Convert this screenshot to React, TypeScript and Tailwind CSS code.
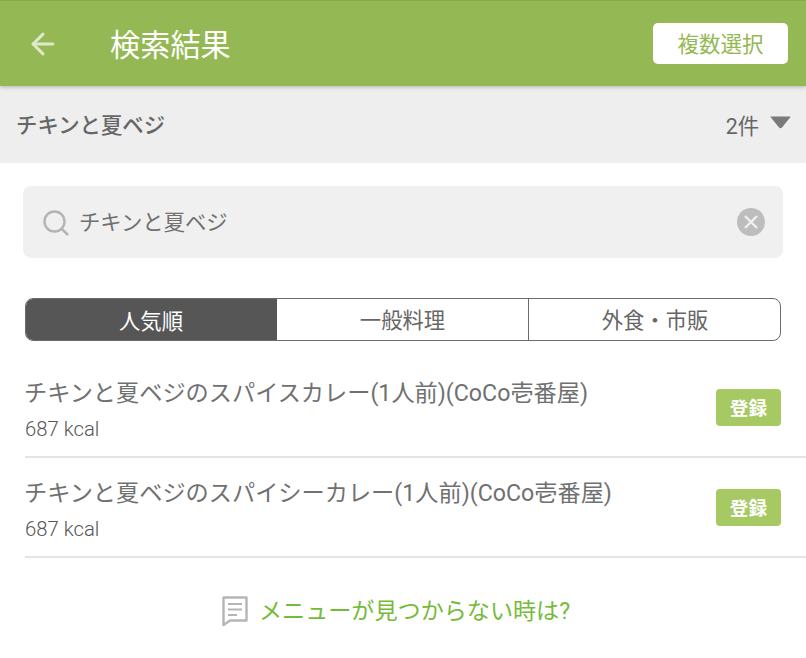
import React from 'react';
import { ArrowLeft } from 'lucide-react';

const font = { fontFamily: 'Roboto, "Noto Sans CJK JP", sans-serif' };

const items = [
  { name: 'チキンと夏ベジのスパイスカレー(1人前)(CoCo壱番屋)', kcal: '687 kcal' },
  { name: 'チキンと夏ベジのスパイシーカレー(1人前)(CoCo壱番屋)', kcal: '687 kcal' },
];

const App: React.FC = () => {
  return (
    <div className="w-[806px] h-[658px] overflow-hidden bg-white" style={font}>
      <header className="relative z-10 h-[86px] bg-[#94b853] border-t border-[#86aa48] shadow-[0_1px_4px_rgba(0,0,0,0.25)] flex items-center">
        <ArrowLeft className="ml-[26px] w-[34px] h-[34px] text-[#dfe9cc]" strokeWidth={2.1} />
        <h1 className="ml-[50px] pt-[5px] text-[30.2px] leading-none text-white">検索結果</h1>
        <button className="ml-auto mr-[18px] w-[135px] h-[41px] pt-[3px] bg-white rounded-[5px] text-[21.5px] leading-none text-[#94b853]">
          複数選択
        </button>
      </header>

      <div className="h-[77px] bg-[#eeeeee] flex items-center pl-4 pr-[15px]">
        <span className="pt-[3px] text-[21.4px] font-medium text-[#666666]">チキンと夏ベジ</span>
        <span className="ml-auto pt-[5px] text-[21.33px] text-[#666666] -translate-x-[2px]">2件</span>
        <svg viewBox="0 0 21 13" className="ml-[9px] mb-[5px] w-[21px] h-[13px]">
          <path d="M0.5 1 Q0.5 0.5 1 0.5 H20 Q20.5 0.5 20.5 1 L12 11.5 Q10.5 13 9 11.5 Z" fill="#7a7a7a" />
        </svg>
      </div>

      <div className="mx-[23px] mt-[23px] h-[72px] bg-[#f0f0f0] rounded-lg flex items-center pl-5 pr-[18px]">
        <svg viewBox="0 0 26 26" className="w-[26px] h-[26px] mt-[2px]" fill="none" stroke="#b4b4b4">
          <circle cx="11.5" cy="11.5" r="10" strokeWidth="2.4" />
          <path d="M18.8 18.8 L25 25" strokeWidth="2.6" />
        </svg>
        <span className="ml-[10px] pt-[2px] text-[21.33px] text-[#707070]">チキンと夏ベジ</span>
        <svg viewBox="0 0 28 28" className="ml-auto w-[28px] h-[28px]">
          <circle cx="14" cy="14" r="14" fill="#bdbdbd" />
          <path d="M8 8 L20 20 M20 8 L8 20" stroke="#f0f0f0" strokeWidth="2.4" />
        </svg>
      </div>

      <div className="mx-[25px] mt-10 h-[43px] grid grid-cols-[251px_252px_252px] rounded-lg border border-[#6b6b6b] overflow-hidden text-[21.33px]">
        <div className="pt-[4px] bg-[#565656] text-white flex items-center justify-center -ml-px -my-px">人気順</div>
        <div className="pt-[3px] text-[#666666] border-r border-[#6b6b6b] flex items-center justify-center">一般料理</div>
        <div className="pt-[3px] text-[#666666] flex items-center justify-center">外食・市販</div>
      </div>

      <div className="ml-[25px]">
        {items.map(item => (
          <div key={item.name} className="h-[100px] first:h-[117px] border-b-2 border-[#e4e4e4] flex items-end pb-[13px] pr-[25px]">
            <div className="flex-1">
              <div className="mb-[5px] text-[23.2px] leading-[34px] text-[#707070] -ml-px">{item.name}</div>
              <div className="text-[20.3px] leading-[28px] font-light text-[#555555]">{item.kcal}</div>
            </div>
            <button className="mb-[17px] w-[65px] h-[37px] pt-[3px] bg-[#a6c964] rounded-[4px] text-[18.67px] leading-none font-bold text-white">
              登録
            </button>
          </div>
        ))}
      </div>

      <div className="mt-[34px] flex items-center pl-[222px]">
        <svg viewBox="0 0 26 30" className="w-[26px] h-[30px]" fill="none" stroke="#b5b5b5">
          <path d="M1.5 1.5 H24.5 V24.5 H8 L1.5 29 Z" strokeWidth="2.4" strokeLinejoin="round" />
          <path d="M6 8 H20 M6 13.5 H20 M6 19 H15" strokeWidth="2.2" />
        </svg>
        <span className="ml-[11px] pt-[3px] text-[23.1px] text-[#75bb3a]">メニューが見つからない時は?</span>
      </div>
    </div>
  );
};

export default App;
